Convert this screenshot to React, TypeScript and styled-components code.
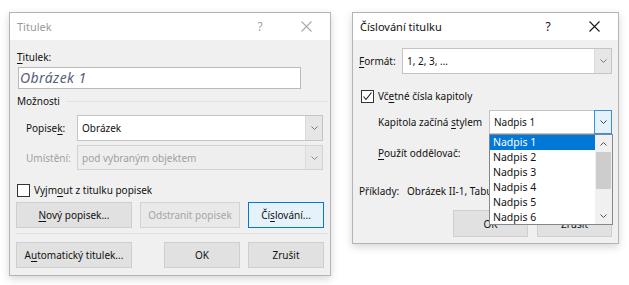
import React from "react";
import styled, { createGlobalStyle, css } from "styled-components";

const Global = createGlobalStyle`
  html, body { margin: 0; padding: 0; background: #ffffff; }
  body { font-family: "Noto Sans", "Open Sans", sans-serif; font-size: 10px; color: #111111; }
  * { box-sizing: border-box; }
  u { text-decoration: underline; text-underline-offset: 2px; text-decoration-thickness: 1px; }
`;

const Page = styled.div`
  display: flex;
  align-items: flex-start;
  gap: 21px;
  padding: 12px 0 0 9px;
  width: 629px;
  height: 285px;
  overflow: hidden;
`;

const Dialog = styled.div<{ $w: number; $h: number }>`
  position: relative;
  width: ${(p) => p.$w}px;
  height: ${(p) => p.$h}px;
  border: 1px solid #b4b4b4;
  background: #f0f0f0;
  box-shadow: 0 3px 8px rgba(0, 0, 0, 0.16);
  display: flex;
  flex-direction: column;
`;

const TitleBar = styled.div<{ $inactive?: boolean }>`
  height: 27px;
  flex: none;
  background: #ffffff;
  display: flex;
  align-items: center;
  padding-left: 7px;
  font-size: 11px;
  color: ${(p) => (p.$inactive ? "#9a9a9a" : "#111111")};
`;

const TitleText = styled.span`
  flex: 1;
`;

const TitleButton = styled.span<{ $w: number; $inactive?: boolean }>`
  width: ${(p) => p.$w}px;
  display: flex;
  align-items: center;
  justify-content: center;
  color: ${(p) => (p.$inactive ? "#a0a0a0" : "#111111")};
  font-size: 12px;
`;

const Body = styled.div<{ $pad: number }>`
  flex: 1;
  display: flex;
  flex-direction: column;
  padding: 0 ${(p) => p.$pad}px;
`;

const Label = styled.div<{ $mt?: number; $indent?: number; $disabled?: boolean }>`
  height: 16px;
  line-height: 16px;
  margin-top: ${(p) => p.$mt ?? 0}px;
  padding-left: ${(p) => p.$indent ?? 0}px;
  color: ${(p) => (p.$disabled ? "#a0a0a0" : "#111111")};
  white-space: nowrap;
`;

const TextInput = styled.div`
  margin: 2px 0 0 2px;
  width: 283px;
  height: 22px;
  background: #ffffff;
  border: 1px solid #b9b9b9;
  font-style: italic;
  font-size: 14px;
  line-height: 20px;
  padding-left: 1px;
  color: #55627a;
  letter-spacing: 0.4px;
`;

const GroupHeader = styled.div`
  margin-top: 4px;
  height: 16px;
  display: flex;
  align-items: center;
  gap: 6px;
  &::after {
    content: "";
    flex: 1;
    height: 1px;
    background: #e3e3e3;
    margin-right: -4px;
  }
`;

const FieldRow = styled.div<{ $mt: number; $h: number; $label: number; $indent: number }>`
  margin-top: ${(p) => p.$mt}px;
  height: ${(p) => p.$h}px;
  display: grid;
  grid-template-columns: ${(p) => p.$label}px auto;
  align-items: center;
  padding-left: ${(p) => p.$indent}px;
`;

const Select = styled.div<{ $w: number; $disabled?: boolean }>`
  position: relative;
  width: ${(p) => p.$w}px;
  height: 100%;
  display: flex;
  background: ${(p) => (p.$disabled ? "#eeeeee" : "#ffffff")};
  border: 1px solid ${(p) => (p.$disabled ? "#d2d2d2" : "#c4c4c4")};
  color: ${(p) => (p.$disabled ? "#a0a0a0" : "#111111")};
`;

const SelectValue = styled.div`
  flex: 1;
  display: flex;
  align-items: center;
  padding-left: 4px;
  white-space: nowrap;
`;

const SelectButton = styled.div<{ $active?: boolean; $disabled?: boolean }>`
  width: 17px;
  display: flex;
  align-items: center;
  justify-content: center;
  ${(p) =>
    p.$active
      ? css`
          background: #e5f1fb;
          border: 1px solid #3c8fd6;
          margin: -1px -1px -1px 0;
          width: 18px;
        `
      : css`
          background: ${p.$disabled ? "#e8e8e8" : "#e6e6e6"};
          border-left: 1px solid #dadada;
        `}
`;

const CheckRow = styled.div<{ $mt: number; $indent?: number }>`
  margin-top: ${(p) => p.$mt}px;
  height: 16px;
  display: flex;
  align-items: center;
  gap: 4px;
  padding-left: ${(p) => p.$indent ?? 0}px;
`;

const CheckBox = styled.span`
  width: 13px;
  height: 13px;
  border: 1px solid #333333;
  background: #ffffff;
  display: flex;
  align-items: center;
  justify-content: center;
  flex: none;
`;

const ButtonRow = styled.div<{ $mt: number }>`
  margin-top: ${(p) => p.$mt}px;
  display: flex;
  gap: 8px;
`;

const Button = styled.div<{ $w: number; $h?: number; $disabled?: boolean; $default?: boolean; $ml?: number }>`
  width: ${(p) => p.$w}px;
  height: ${(p) => p.$h ?? 26}px;
  margin-left: ${(p) => p.$ml ?? 0}px;
  display: flex;
  align-items: center;
  justify-content: center;
  white-space: nowrap;
  background: ${(p) => (p.$default ? "#e5f1fb" : p.$disabled ? "#e9e9e9" : "#e1e1e1")};
  border: 1px solid ${(p) => (p.$default ? "#0078d7" : p.$disabled ? "#d3d3d3" : "#cfcfcf")};
  color: ${(p) => (p.$disabled ? "#a6a6a6" : "#111111")};
`;

const Separator = styled.div<{ $mt: number }>`
  margin-top: ${(p) => p.$mt}px;
  height: 1px;
  background: #e2e2e2;
  margin-right: -4px;
`;

const ListBox = styled.div`
  position: absolute;
  top: 23px;
  left: -1px;
  width: 124px;
  height: 91px;
  background: #ffffff;
  border: 1px solid #828790;
  display: flex;
  z-index: 5;
  color: #111111;
`;

const ListItems = styled.div`
  flex: 1;
  display: flex;
  flex-direction: column;
`;

const ListItem = styled.div<{ $selected?: boolean }>`
  height: 15px;
  line-height: 15px;
  padding-left: 3px;
  font-size: 10.5px;
  background: ${(p) => (p.$selected ? "#0078d7" : "transparent")};
  color: ${(p) => (p.$selected ? "#ffffff" : "#111111")};
`;

const ScrollBar = styled.div`
  width: 17px;
  background: #f0f0f0;
  display: flex;
  flex-direction: column;
`;

const ScrollArrow = styled.div`
  height: 17px;
  display: flex;
  align-items: center;
  justify-content: center;
`;

const ScrollTrack = styled.div`
  flex: 1;
  display: flex;
  flex-direction: column;
`;

const ScrollThumb = styled.div`
  margin: 0 1px;
  height: 37px;
  background: #cdcdcd;
`;

const Chevron = ({ up, color = "#606060" }: { up?: boolean; color?: string }) => (
  <svg width="9" height="6" viewBox="0 0 9 6">
    <polyline
      points={up ? "1.5,4.5 4.5,1.5 7.5,4.5" : "1.5,1.5 4.5,4.5 7.5,1.5"}
      fill="none"
      stroke={color}
      strokeWidth="1"
    />
  </svg>
);

const CloseIcon = ({ color }: { color: string }) => (
  <svg width="11" height="11" viewBox="0 0 11 11">
    <path d="M0.5 0.5 L10.5 10.5 M10.5 0.5 L0.5 10.5" stroke={color} strokeWidth="1.1" fill="none" />
  </svg>
);

const Check = () => (
  <svg width="11" height="11" viewBox="0 0 11 11">
    <polyline points="1.5,5.5 4,8.5 9.5,1.5" fill="none" stroke="#1a1a1a" strokeWidth="1.1" />
  </svg>
);

export default function App() {
  return (
    <>
      <Global />
      <Page>
        <Dialog $w={322} $h={264}>
          <TitleBar $inactive>
            <TitleText>Titulek</TitleText>
            <TitleButton $w={44} $inactive>?</TitleButton>
            <TitleButton $w={48} $inactive>
              <CloseIcon color="#a8a8a8" />
            </TitleButton>
          </TitleBar>
          <Body $pad={6}>
            <Label $mt={9} $indent={1}>
              <u>T</u>itulek:
            </Label>
            <TextInput>Obrázek 1</TextInput>
            <GroupHeader>
              <Label $indent={1}>Možnosti</Label>
            </GroupHeader>
            <FieldRow $mt={6} $h={26} $label={51} $indent={10}>
              <Label>
                Popise<u>k</u>:
              </Label>
              <Select $w={246}>
                <SelectValue>Obrázek</SelectValue>
                <SelectButton>
                  <Chevron color="#777" />
                </SelectButton>
              </Select>
            </FieldRow>
            <FieldRow $mt={4} $h={25} $label={51} $indent={10}>
              <Label $disabled>Umístění:</Label>
              <Select $w={246} $disabled>
                <SelectValue>pod vybraným objektem</SelectValue>
                <SelectButton $disabled>
                  <Chevron color="#8a8a8a" />
                </SelectButton>
              </Select>
            </FieldRow>
            <CheckRow $mt={12} $indent={1}>
              <CheckBox />
              <span>
                Vyjm<u>o</u>ut z titulku popisek
              </span>
            </CheckRow>
            <ButtonRow $mt={4}>
              <Button $w={116}>
                <span>
                  <u>N</u>ový popisek...
                </span>
              </Button>
              <Button $w={100} $disabled>
                Odstranit popisek
              </Button>
              <Button $w={76} $default>
                <span>
                  Čí<u>s</u>lování...
                </span>
              </Button>
            </ButtonRow>
            <Separator $mt={5} />
            <ButtonRow $mt={8}>
              <Button $w={116}>
                <span>
                  A<u>u</u>tomatický titulek...
                </span>
              </Button>
              <Button $w={76} $ml={24}>
                OK
              </Button>
              <Button $w={76}>Zrušit</Button>
            </ButtonRow>
          </Body>
        </Dialog>

        <Dialog $w={267} $h={232}>
          <TitleBar>
            <TitleText>Číslování titulku</TitleText>
            <TitleButton $w={44}>?</TitleButton>
            <TitleButton $w={48}>
              <CloseIcon color="#1a1a1a" />
            </TitleButton>
          </TitleBar>
          <Body $pad={6}>
            <FieldRow $mt={8} $h={26} $label={43} $indent={0}>
              <Label>
                <u>F</u>ormát:
              </Label>
              <Select $w={210}>
                <SelectValue>1, 2, 3, ...</SelectValue>
                <SelectButton>
                  <Chevron color="#777" />
                </SelectButton>
              </Select>
            </FieldRow>
            <CheckRow $mt={14} $indent={2}>
              <CheckBox>
                <Check />
              </CheckBox>
              <span>
                Vč<u>e</u>tné čísla kapitoly
              </span>
            </CheckRow>
            <FieldRow $mt={6} $h={24} $label={111} $indent={19}>
              <Label>
                Kapitola začíná <u>s</u>tylem
              </Label>
              <Select $w={123}>
                <SelectValue>Nadpis 1</SelectValue>
                <SelectButton $active>
                  <Chevron color="#444" />
                </SelectButton>
                <ListBox>
                  <ListItems>
                    <ListItem $selected>Nadpis 1</ListItem>
                    <ListItem>Nadpis 2</ListItem>
                    <ListItem>Nadpis 3</ListItem>
                    <ListItem>Nadpis 4</ListItem>
                    <ListItem>Nadpis 5</ListItem>
                    <ListItem>Nadpis 6</ListItem>
                  </ListItems>
                  <ScrollBar>
                    <ScrollArrow>
                      <Chevron up color="#555" />
                    </ScrollArrow>
                    <ScrollTrack>
                      <ScrollThumb />
                    </ScrollTrack>
                    <ScrollArrow>
                      <Chevron color="#555" />
                    </ScrollArrow>
                  </ScrollBar>
                </ListBox>
              </Select>
            </FieldRow>
            <Label $mt={11} $indent={19}>
              <u>P</u>oužít oddělovač:
            </Label>
            <Label $mt={22} $indent={0}>
              Příklady:&nbsp;&nbsp; Obrázek II-1, Tabulka II-1
            </Label>
            <ButtonRow $mt={11}>
              <Button $w={75} $h={27} $ml={94}>
                OK
              </Button>
              <Button $w={75} $h={27} $ml={1}>
                Zrušit
              </Button>
            </ButtonRow>
          </Body>
        </Dialog>
      </Page>
    </>
  );
}
